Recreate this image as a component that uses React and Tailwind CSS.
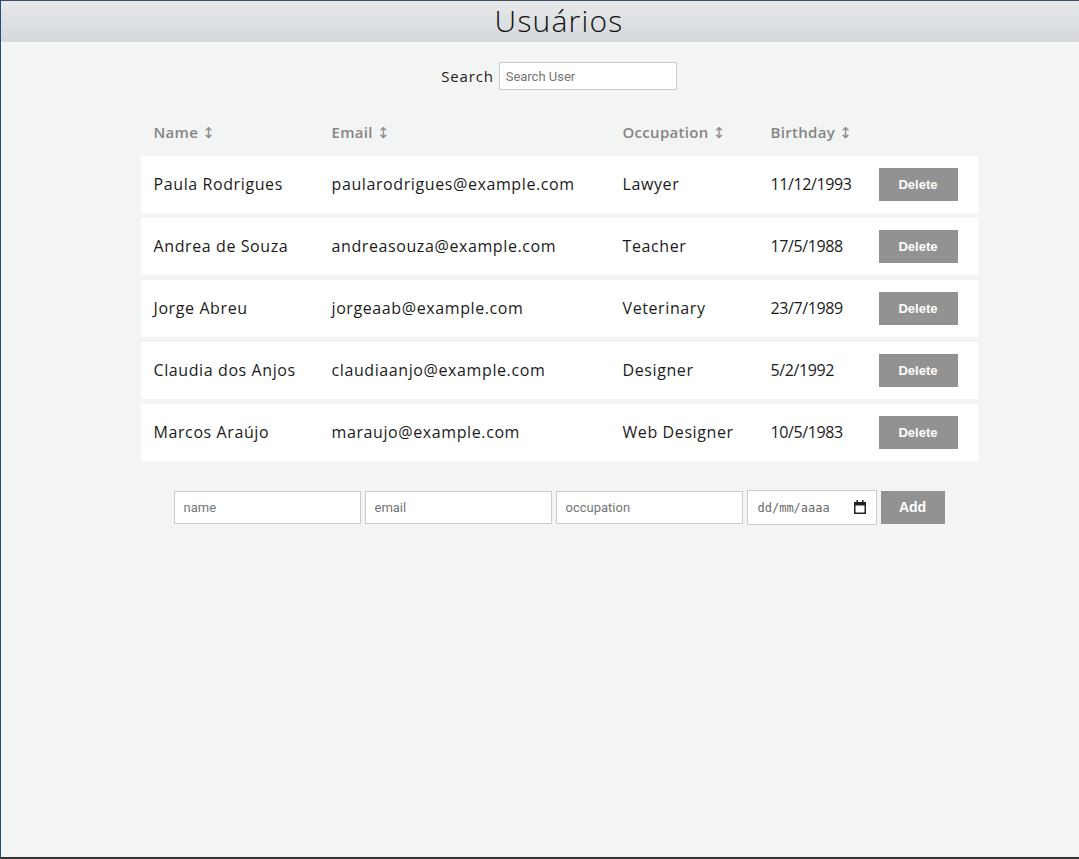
import { useState } from 'react';

const initialUsers = [
  { name: 'Paula Rodrigues', email: 'paularodrigues@example.com', occupation: 'Lawyer', birthday: '11/12/1993' },
  { name: 'Andrea de Souza', email: 'andreasouza@example.com', occupation: 'Teacher', birthday: '17/5/1988' },
  { name: 'Jorge Abreu', email: 'jorgeaab@example.com', occupation: 'Veterinary', birthday: '23/7/1989' },
  { name: 'Claudia dos Anjos', email: 'claudiaanjo@example.com', occupation: 'Designer', birthday: '5/2/1992' },
  { name: 'Marcos Araújo', email: 'maraujo@example.com', occupation: 'Web Designer', birthday: '10/5/1983' },
];

const columns = [
  { key: 'name', label: 'Name', width: 'w-[178px]' },
  { key: 'email', label: 'Email', width: 'w-[291px]' },
  { key: 'occupation', label: 'Occupation', width: 'w-[148px]' },
  { key: 'birthday', label: 'Birthday', width: 'w-[108px]' },
];

export default function App() {
  const [users, setUsers] = useState(initialUsers);
  const [search, setSearch] = useState('');

  const visible = users.filter((u) => u.name.toLowerCase().includes(search.toLowerCase()));

  const handleDelete = (email) => {
    setUsers(users.filter((u) => u.email !== email));
  };

  return (
    <div className="h-[859px] overflow-hidden border-l border-t border-b-2 border-l-[#1d4f80] border-t-[#3d4a63] border-b-[#333] bg-[#f3f4f4] font-['Open_Sans',sans-serif] text-[#1b1b1b]">
      <header className="h-[41px] bg-gradient-to-b from-[#e6e8e9] to-[#d6d9dc] pl-[38px] text-center">
        <h1 className="text-[30px] font-light leading-[40px] tracking-[1.2px] text-[#111]">Usuários</h1>
      </header>

      <main className="pl-[38px]">
        <div className="mt-[20px] flex items-center justify-center gap-[5px]">
          <label className="text-[15px] tracking-[0.8px]">Search</label>
          <input
            value={search}
            onChange={(e) => setSearch(e.target.value)}
            placeholder="Search User"
            className="h-[28px] w-[178px] border border-[#ccc] bg-white px-[6px] font-['Roboto',sans-serif] text-[13px] outline-none placeholder:text-[#757575]"
          />
        </div>

        <table className="mx-auto mt-[20px] w-[837px] table-fixed border-separate border-spacing-x-0 border-spacing-y-[5px]">
          <thead>
            <tr className="h-[36px]">
              {columns.map((c) => (
                <th
                  key={c.key}
                  className={`${c.width} pl-[13px] text-left text-[15px] font-semibold tracking-[0.3px] text-[#858585]`}
                >
                  {c.label}{' '}
                  <span className="font-['DejaVu_Sans',sans-serif] text-[15px] font-normal text-[#8a8a8a]">↕</span>
                </th>
              ))}
              <th className="w-[112px]"></th>
            </tr>
          </thead>
          <tbody>
            {visible.map((u) => (
              <tr key={u.email} className="h-[57px] bg-white text-[16px] leading-[22px] tracking-[0.6px]">
                <td className="pb-[1px] pl-[13px]">{u.name}</td>
                <td className="pb-[1px] pl-[13px]">{u.email}</td>
                <td className="pb-[1px] pl-[13px]">{u.occupation}</td>
                <td className="pb-[1px] pl-[13px] tracking-[-0.4px]">{u.birthday}</td>
                <td className="pl-[13px]">
                  <button
                    onClick={() => handleDelete(u.email)}
                    className="h-[33px] w-[79px] bg-[#929292] font-['Liberation_Sans',sans-serif] text-[13px] font-bold tracking-normal text-white"
                  >
                    Delete
                  </button>
                </td>
              </tr>
            ))}
          </tbody>
        </table>

        <form
          onSubmit={(e) => e.preventDefault()}
          className="mt-[24px] flex items-center justify-center gap-[4px] font-['Roboto',sans-serif] text-[13px]"
        >
          <input placeholder="name" className="h-[33px] w-[187px] border border-[#ccc] bg-white px-[9px] outline-none placeholder:text-[#757575]" />
          <input placeholder="email" className="h-[33px] w-[187px] border border-[#ccc] bg-white px-[9px] outline-none placeholder:text-[#757575]" />
          <input placeholder="occupation" className="h-[33px] w-[187px] border border-[#ccc] bg-white px-[9px] outline-none placeholder:text-[#757575]" />
          <div className="relative h-[35px] w-[130px]">
            <input
              placeholder="dd/mm/aaaa"
              className="h-full w-full border border-[#ccc] bg-white pl-[10px] pr-[28px] font-['DejaVu_Sans_Mono',monospace] text-[12px] outline-none placeholder:text-[#6b6b6b]"
            />
            <svg
              className="pointer-events-none absolute right-[11px] top-[10px]"
              width="12"
              height="14"
              viewBox="0 0 12 14"
            >
              <rect x="0.75" y="2.75" width="10.5" height="10.5" fill="none" stroke="#222" strokeWidth="1.5" />
              <rect x="0" y="2" width="12" height="3.5" fill="#222" />
              <rect x="2.5" y="0" width="1.5" height="3" fill="#222" />
              <rect x="8" y="0" width="1.5" height="3" fill="#222" />
            </svg>
          </div>
          <button type="submit" className="h-[33px] w-[64px] bg-[#929292] font-['Liberation_Sans',sans-serif] text-[14px] font-bold text-white">
            Add
          </button>
        </form>
      </main>
    </div>
  );
}
